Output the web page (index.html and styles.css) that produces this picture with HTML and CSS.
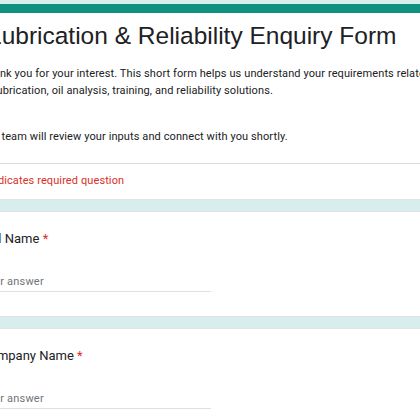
FILE: index.html
```html
<!DOCTYPE html>
<html lang="en">
<head>
<meta charset="utf-8">
<title>Lubrication &amp; Reliability Enquiry Form</title>
<link rel="stylesheet" href="styles.css">
</head>
<body>
<div class="page">
  <div class="card header-card">
    <div class="header-main">
      <h1 class="title">Lubrication &amp; Reliability Enquiry Form</h1>
      <p class="desc">Thank you for your interest. This short form helps us understand your requirements related to lubrication, oil analysis, training, and reliability solutions.</p>
      <p class="desc desc-gap">Our team will review your inputs and connect with you shortly.</p>
    </div>
    <div class="header-note">
      <p class="required-note">* Indicates required question</p>
    </div>
  </div>

  <div class="card question">
    <div class="q-label">Full Name <span class="star">*</span></div>
    <div class="answer">Your answer</div>
  </div>

  <div class="card question">
    <div class="q-label">Company Name <span class="star">*</span></div>
    <div class="answer">Your answer</div>
  </div>
</div>
</body>
</html>
```

FILE: styles.css
```css
html, body {
  margin: 0;
  padding: 0;
}
body {
  background: #d8eded;
  overflow: hidden;
  width: 420px;
  height: 420px;
  font-family: Roboto, "Liberation Sans", Arial, sans-serif;
  color: #202124;
}
.page {
  width: 640px;
  margin: 4px 0 0 -44px;
  display: flex;
  flex-direction: column;
  gap: 11px;
}
.card {
  background: #fff;
  border: 1px solid #dfe3e3;
  border-radius: 8px;
  padding: 0 24px;
}
.header-card {
  border-top: 9px solid #10917f;
  padding: 0;
}
.header-main {
  padding: 7px 24px 18px;
  border-bottom: 1px solid #dadce0;
}
.title {
  margin: 0 0 0 7px;
  font-family: "Liberation Sans", Arial, sans-serif;
  font-weight: 400;
  font-size: 24.5px;
  line-height: 32px;
  color: #202124;
}
.desc {
  max-width: 458px;
  margin: 13px 0 0;
  font-size: 11px;
  line-height: 17px;
  letter-spacing: 0.1px;
  color: #202124;
}
.desc-gap {
  margin-top: 29px;
}
.header-note {
  padding: 8px 24px 10px;
}
.required-note {
  margin: 0;
  font-size: 11px;
  line-height: 17px;
  letter-spacing: 0.1px;
  color: #d93025;
}
.question {
  padding-top: 17px;
  padding-bottom: 24px;
}
.q-label {
  font-size: 13px;
  line-height: 20px;
  color: #202124;
}
.star {
  color: #d93025;
}
.answer {
  margin-top: 24px;
  width: 230px;
  font-size: 11px;
  line-height: 17px;
  letter-spacing: 0.2px;
  color: #70757a;
  padding-bottom: 1px;
  border-bottom: 1px solid #e0e0e0;
}
```
